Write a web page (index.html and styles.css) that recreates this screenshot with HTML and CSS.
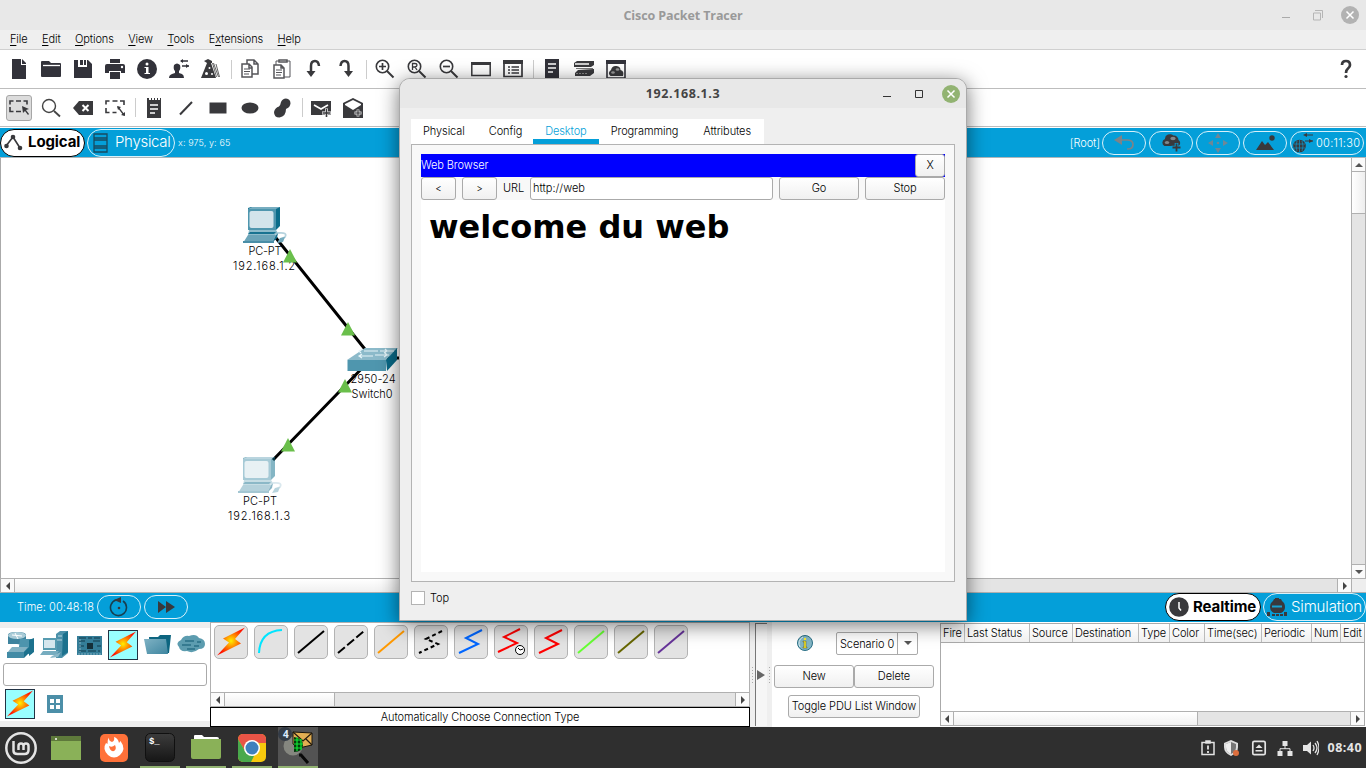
FILE: index.html
```html
<!DOCTYPE html>
<html lang="en">
<head>
<meta charset="utf-8">
<title>Cisco Packet Tracer</title>
<link rel="stylesheet" href="styles.css">
</head>
<body>
<svg class="defs" width="0" height="0" aria-hidden="true">
  <defs>
    <radialGradient id="hot" cx=".5" cy=".48" r=".5"><stop offset="0" stop-color="#fff000"/><stop offset=".45" stop-color="#ff8a00"/><stop offset="1" stop-color="#ff1400"/></radialGradient>
    <linearGradient id="steel" x1="0" y1="0" x2="1" y2="1"><stop offset="0" stop-color="#7fb2c4"/><stop offset="1" stop-color="#3f86a0"/></linearGradient>
    <linearGradient id="term" x1="0" y1="0" x2="0" y2="1"><stop offset="0" stop-color="#3c3c3c"/><stop offset="1" stop-color="#161616"/></linearGradient>
    <symbol id="bolt" viewBox="0 0 30 30"><path d="M29 .500 7 11.500l6 4L1 28.500l24-12-6-4.500Z" fill="url(#hot)"/></symbol>
    <symbol id="zoomglass" viewBox="0 0 20 20"><circle cx="7.500" cy="7.500" r="6.200" fill="none" stroke="#39393c" stroke-width="1.600"/><path d="m12 12 6.500 6.500" stroke="#39393c" stroke-width="2"/></symbol>
    <symbol id="pc" viewBox="0 0 46 38">
      <path d="m7 2 3-1h29v19l-4 4H7Z" fill="#0b6d8a"/><path d="M7 3h28v21H7Z" fill="#4f96ae"/><path d="m7 3 4-2h28l-4 2Z" fill="#77adc0"/>
      <rect x="8.500" y="5" width="24" height="17" rx="2" fill="#d3e4eb"/>
      <path d="M8 24h27l2 3-3 2H7Z" fill="#8ebccb"/><path d="M9 26h26l-2 2H7Z" fill="#197391"/>
      <path d="M7 29h28l-4 8H2Z" fill="#6ba4b8"/><path d="m35 29 2-2-1 5-5 5Z" fill="#176f8d"/><path d="M2 35h31v2H2Z" fill="#4a8ea7"/>
      <path d="M37 27q10-1 7 4l-4 2" fill="none" stroke="#b6d3de" stroke-width="1.800"/><path d="m39 32 5-1-2 5-6 1Z" fill="#73aabd"/>
    </symbol>
    <symbol id="tri" viewBox="0 0 14 14"><path d="M7 0 14 13.500H0Z" fill="#6abf4b"/></symbol>
    <symbol id="cloudadd" viewBox="0 0 20 20"><path d="M3.500 13a3.800 3.800 0 0 1 .5-7 5 4.500 0 0 1 8.500-3.500 4.500 4.500 0 0 1 5 4.500 3.500 3.500 0 0 1 0 6Z" fill="#39393c"/><ellipse cx="6" cy="9.500" rx="2.200" ry="1.500" fill="#7f878b"/><ellipse cx="12" cy="5.500" rx="2.700" ry="1.700" fill="#7f878b"/><path d="M15.500 10v9.500M10.500 14.500h9.500" stroke="#049fd9" stroke-width="3.600"/><path d="M15.500 10.500v8M11.500 14.500h8" stroke="#39393c" stroke-width="1.800"/></symbol>
  </defs>
</svg>

<div class="desktop">
  <header class="titlebar"><span class="caption">Cisco Packet Tracer</span>
    <div class="winctl">
      <svg width="80" height="20"><path d="M2 12.500h8" stroke="#aaa"/><path d="M35 5.500h7.500V13M33.500 8h7v7h-7Z" fill="none" stroke="#b5b5b5"/><circle cx="70" cy="10" r="9" fill="#b2b2b2"/><path d="m66.500 6.500 7 7m0-7-7 7" stroke="#fff" stroke-width="1.500"/></svg>
    </div>
  </header>
  <nav class="menubar"><span><u>F</u>ile</span><span><u>E</u>dit</span><span><u>O</u>ptions</span><span><u>V</u>iew</span><span><u>T</u>ools</span><span>E<u>x</u>tensions</span><span><u>H</u>elp</span></nav>

  <div class="toolbar main">
    <i class="tool"><svg width="20" height="20"><path d="M3 0h9v6h5v14H3Z" fill="#32323a"/><path d="m13 0 4 4v1h-4Z" fill="#32323a"/></svg></i>
    <i class="tool"><svg width="20" height="20"><path d="M0 3q0-1 1-1h7l2 2h9q1 0 1 1v12q0 1-1 1H1q-1 0-1-1Z" fill="#32323a"/><path d="M2 6.500h17" stroke="#fff" stroke-width="1.300"/></svg></i>
    <i class="tool"><svg width="20" height="20"><path d="M1 1h14l4 4v14H1Z" fill="#32323a"/><path d="M5 0h9v8H5Z" fill="#fff"/><path d="M5 1h5v5H5ZM11 1h2v5h-2Z" fill="#32323a"/><path d="M5 1h2v6h6V1h1v7H5Z" fill="#fff"/></svg></i>
    <i class="tool"><svg width="20" height="20"><path d="M5 0h10v4H5ZM2 5h16q2 0 2 2v7h-4v-2H4v2H0V7q0-2 2-2ZM5 13h10v7H5Z" fill="#32323a"/><circle cx="17" cy="8" r="1.200" fill="#fff"/></svg></i>
    <i class="tool"><svg width="20" height="20"><circle cx="10" cy="10" r="10" fill="#32323a"/><circle cx="10" cy="5" r="1.500" fill="#fff"/><path d="M7.500 8h4v6h1.500v1H7.500v-1H9V9H7.500Z" fill="#fff"/></svg></i>
    <i class="tool"><svg width="20" height="20"><path d="M0 19q0-3 3-4l3-1v-2q-2-2-1-6 3-3 6 0 1 4-1 6v2l3 1q2 1 2 4Z" fill="#32323a"/><path d="M12 2h7M13 7h7" stroke="#32323a" stroke-width="1.500"/><path d="M14 0v4l-3-2ZM17 5v4l3-2Z" fill="#32323a"/></svg></i>
    <i class="tool"><svg width="20" height="20"><path d="M6 4h4l5 15H0Z" fill="#39393c"/><path d="m3 2 4-2 4 2v2H6Z" fill="#39393c"/><path d="m11.500 4 4 14m-3-14 5 14m1 0L15 5" stroke="#666" fill="none"/><circle cx="5.500" cy="14.500" r="1.500" fill="#fff"/><circle cx="8.500" cy="9" r="1" fill="#fff"/><circle cx="11" cy="15" r="1" fill="#fff"/></svg></i>
    <b class="sep"></b>
    <i class="tool"><svg width="20" height="20" fill="#fff" stroke="#55555a" stroke-width="1.500"><path d="M7 1h7l4 4v10H7ZM14 1v4h4"/><path d="M2 5h7l3 3v10H2ZM9 5v4h3"/><path d="M4 10h6M4 12.500h6M4 15h5" stroke-width="1.200"/></svg></i>
    <i class="tool"><svg width="20" height="20" fill="#fff" stroke="#55555a" stroke-width="1.500"><path d="M4 2h14v16H4Z" stroke-width="1"/><path d="M7 1h8v2H7Z"/><path d="M2 6h7l3 3v10H2ZM9 6v3h3"/><path d="M4 11h6M4 13.500h6M4 16h5" stroke-width="1.200"/></svg></i>
    <i class="tool"><svg width="20" height="20"><path d="M7 13V7q0-5 4-5 3.500 0 4 5" fill="none" stroke="#39393c" stroke-width="2.500"/><path d="M2.500 12h9L7 18Z" fill="#39393c"/></svg></i>
    <i class="tool"><svg width="20" height="20"><path d="M12.500 13V7q0-5-4-5-3.500 0-4 5" fill="none" stroke="#39393c" stroke-width="2.500"/><path d="M8 12h9l-4.500 6Z" fill="#39393c"/></svg></i>
    <b class="sep"></b>
    <i class="tool"><svg width="20" height="20"><use href="#zoomglass"/><path d="M4 7.500h7M7.500 4v7" stroke="#39393c" stroke-width="1.700"/></svg></i>
    <i class="tool"><svg width="20" height="20"><use href="#zoomglass"/><path d="M5.500 11V4.500H8q2 0 2 1.500T8 8H6m2 0 2 3" fill="none" stroke="#39393c" stroke-width="1.300"/></svg></i>
    <i class="tool"><svg width="20" height="20"><use href="#zoomglass"/><path d="M4 7.500h7" stroke="#39393c" stroke-width="1.700"/></svg></i>
    <i class="tool"><svg width="20" height="20"><path d="M.800 4h18.400v12.500H.800Z" fill="#fff" stroke="#39393c" stroke-width="1.500"/><path d="M0 3h20v3H0Z" fill="#39393c"/></svg></i>
    <i class="tool"><svg width="20" height="20"><path d="M1 2h18v15.500H1Z" fill="#fff" stroke="#39393c" stroke-width="1.700"/><path d="M0 1h20v4H0Z" fill="#39393c"/><path d="M5 8h2m1.500 0H16M5 11h2m1.500 0H16M5 14h2m1.500 0H16" stroke="#39393c" stroke-width="1.500"/></svg></i>
    <b class="sep"></b>
    <i class="tool"><svg width="20" height="20"><path d="M3 0h14v20H3Z" fill="#32323a"/><path d="M6 5h8M6 9h8M6 13h5" stroke="#fff" stroke-width="1.500"/></svg></i>
    <i class="tool"><svg width="20" height="20"><path d="M3 2h17v4l-3 2H0V4Z" fill="#39393c"/><path d="M1 5h14" stroke="#ccc" stroke-width="2"/><path d="M2 9h17v1H2Z" fill="#777"/><path d="m4 11 16-1v4l-4 3H1v-3Z" fill="#39393c"/><path d="M2 14.500h12" stroke="#888" stroke-dasharray="2 1"/></svg></i>
    <i class="tool"><svg width="20" height="20"><path d="M1 2h18v17H1Z" fill="#fff" stroke="#32323a" stroke-width="1.600"/><path d="M0 1h20v4H0Z" fill="#32323a"/><path d="M4.500 17q-3.500-3 .5-6 1-4.500 5.500-4 4 .500 4 4 4 1 2.500 6Z" fill="#39393c"/><ellipse cx="7" cy="13.500" rx="1.800" ry="1.200" fill="#999"/><ellipse cx="11.500" cy="10.500" rx="1.800" ry="1.200" fill="#999"/></svg></i>
    <i class="tool helpmark"><svg width="20" height="20"><path d="M6 6q0-4 4-4t4 4q0 2-2 3.500T10 14" stroke="#39393c" stroke-width="2.700" fill="none"/><circle cx="10" cy="17.500" r="1.600" fill="#39393c"/></svg></i>
  </div>

  <div class="toolbar draw">
    <i class="tool picked"><svg width="20" height="20"><path d="M1 6.500V3h3.500M7 3h5m2.500 0H18v3.500M1 9v4.500h3.500M7 13.500h5" stroke="#39393c" stroke-width="1.600" fill="none"/><path d="m13 8 7 3-3 1 3 4-1 1-3-4-2 2Z" fill="#39393c"/></svg></i>
    <i class="tool"><svg width="20" height="20"><circle cx="8" cy="8" r="6.500" fill="none" stroke="#444" stroke-width="1.400"/><path d="m13 13 6 5.500" stroke="#444" stroke-width="1.800"/></svg></i>
    <i class="tool"><svg width="20" height="20"><path d="m0 10 6-7h14v14H6Z" fill="#39393c"/><path d="m9.500 7 6 6m0-6-6 6" stroke="#fff" stroke-width="2"/></svg></i>
    <i class="tool"><svg width="20" height="20"><path d="M1 6.500V3h3.500M7.500 3h5M15 3h4v4M1 10v4.500h3.500m3 0h4" stroke="#39393c" stroke-width="1.600" fill="none"/><path d="m13 9 6 8" stroke="#39393c" stroke-width="1.300"/><path d="m12 8 4 1-3 3ZM20 18l-4-1 4-3Z" fill="#39393c"/></svg></i>
    <b class="sep"></b>
    <i class="tool"><svg width="20" height="20"><path d="M3 0h2v2h2V0h1v2h2V0h1v2h2V0h1v2h2V0h1v20H3Z" fill="#39393c"/><path d="M6 7h8M6 11h8M6 15h5" stroke="#fff" stroke-width="1.300"/></svg></i>
    <i class="tool"><svg width="20" height="20"><path d="M4 16.500 16 4" stroke="#39393c" stroke-width="2"/></svg></i>
    <i class="tool"><svg width="20" height="20"><path d="M1.500 4.500h17v11h-17Z" fill="#39393c"/></svg></i>
    <i class="tool"><svg width="20" height="20"><ellipse cx="10" cy="10" rx="8.500" ry="5.500" fill="#39393c"/></svg></i>
    <i class="tool"><svg width="20" height="20"><path d="M9 4q1.500-3.500 5-3.500 4.500.5 4.500 5-.5 4-4.500 5.500 0 7.500-6.500 8.500-5.500 0-5.500-5.500 1-4.500 5-5.500 1.500-1.500 2-4.500Z" fill="#39393c"/></svg></i>
    <b class="sep"></b>
    <i class="tool"><svg width="20" height="20"><path d="M0 3h20v14H0Z" fill="#39393c"/><path d="m3 7 7 4 7-4" fill="none" stroke="#fff" stroke-width="1.700"/><path d="M15.500 10.500v9M11 15h9" stroke="#fff" stroke-width="3"/><path d="M15.500 11v8m-4-4h8" stroke="#39393c" stroke-width="1.600"/></svg></i>
    <i class="tool"><svg width="20" height="20"><path d="m0 5 10-5 10 5v15H0Z" fill="#39393c"/><path d="m2 6 8-4 8 4v1l-8 5-8-5Z" fill="#fff"/><path d="M15 11.500v7m-3.500-3.500h7" stroke="#ddd" stroke-width="2.800"/><path d="M15 12v6m-3-3h6" stroke="#39393c" stroke-width="1.200"/></svg></i>
  </div>

  <div class="bluebar nav">
    <div class="pill solid"><svg width="20" height="18"><path d="M2 12 9 3l7 11" fill="none" stroke="#39393c" stroke-width="1.600"/><circle cx="2.500" cy="12" r="2.300" fill="#39393c"/><circle cx="9" cy="3" r="2.300" fill="#39393c"/><circle cx="16" cy="14" r="2.300" fill="#39393c"/></svg><span class="lg">Logical</span></div>
    <div class="pill outline"><svg width="17" height="20"><path d="M2 1h13v18H2ZM2 5h13M2 7h13M2 13h13M2 15h13" fill="none" stroke="#174b60" stroke-width="1.300"/></svg><span class="ph">Physical</span></div>
    <span class="coords">x: 975, y: 65</span>
    <span class="root">[Root]</span>
    <div class="chip"><svg width="22" height="20"><path d="M5 7h9q6 0 6 4.500T15 16h-1" fill="none" stroke="#7d8388" stroke-width="1.700"/><path d="M1 7 9 2v10Z" fill="#7d8388"/></svg></div>
    <div class="chip"><svg width="20" height="20"><use href="#cloudadd"/></svg></div>
    <div class="chip"><svg width="20" height="20" fill="#6f8796"><path d="m10 0 3 5H7ZM10 20l3-5H7ZM0 10l5-3v6ZM20 10l-5-3v6Z"/><circle cx="10" cy="10" r="1.300"/></svg></div>
    <div class="chip"><svg width="20" height="20" fill="#39393c"><path d="M1 17 7 8l3 4 3-3 6 8Z"/><circle cx="17" cy="5" r="2.700"/></svg></div>
    <div class="chip clock"><svg width="20" height="20"><circle cx="6.500" cy="13" r="6.300" fill="#39393c"/><path d="M1 11h11M1 15h11M6.500 7v12M4 8q-2 5 0 10M9 8q2 5 0 10" stroke="#118dbb" stroke-width=".8" fill="none"/><path d="M12 2h8m-8 6h8" stroke="#39393c" stroke-width="1.200"/><path d="m10 2 4-2v4ZM20 8l-4-2v4Z" fill="#39393c"/></svg><span>00:11:30</span></div>
  </div>

  <div class="workspace">
    <svg class="topology" width="1350" height="420" viewBox="1 158 1350 420">
      <path d="M276 238 372 358 273 460" fill="none" stroke="#000" stroke-width="3"/><path d="M372 358h40" stroke="#000" stroke-width="3"/>
      <use href="#pc" x="241" y="206" width="46" height="38"/>
      <use href="#pc" x="236" y="456" width="46" height="38" opacity=".5"/>
      <path d="m365 348 33 0-12 12h-39Z" fill="#8cbaca"/><path d="M347.500 360H386v11h-38.500Z" fill="#4f96ae"/><path d="m386 360 11-12v12l-10 11Z" fill="#096a88"/>
      <path d="m364 351h14m-18 5h13m7-5h14m-19 4h14m-27-6-3 2 2 2m24-4 2 2-3 2m-22 1-3 2 3 2m23-5 2 2-3 2" stroke="#e5f4f8" stroke-width="1.200" fill="none"/>
      <g class="devname"><text x="265" y="255" textLength="33">PC-PT</text><text x="264" y="270" textLength="62">192.168.1.2</text><text x="373" y="383" textLength="45">2950-24</text><text x="372" y="398" textLength="41">Switch0</text><text x="260" y="505" textLength="34">PC-PT</text><text x="259" y="520" textLength="62">192.168.1.3</text></g>
      <use href="#tri" x="283" y="249" width="14" height="14"/><use href="#tri" x="341" y="322" width="14" height="14"/><use href="#tri" x="338" y="379" width="14" height="14"/><use href="#tri" x="281" y="438" width="14" height="14"/>
    </svg>
    <div class="vscroll"><b class="arrow up"></b><b class="thumb"></b><b class="track"></b><b class="arrow down"></b></div>
  </div>
  <div class="hscroll wide"><b class="arrow left"></b><b class="thumb"></b><b class="track"></b><b class="arrow right"></b><b class="corner"></b></div>

  <div class="bluebar time">
    <span class="elapsed">Time: 00:48:18</span>
    <div class="chip"><svg width="20" height="20"><path d="M7 3a8 8 0 1 0 7 1" fill="none" stroke="#173f50" stroke-width="1.600"/><path d="m5 3 7-3v6Z" fill="#39393c"/><circle cx="10" cy="11" r="1.300" fill="#39393c"/></svg></div>
    <div class="chip"><svg width="20" height="20"><path d="m2 4 8 6-8 6Zm8 0 9 6-9 6Z" fill="#39393c"/></svg></div>
    <div class="pill solid real"><svg width="20" height="20"><circle cx="10" cy="10" r="9.800" fill="#39393c"/><path d="M10 5v6l2 2.500" fill="none" stroke="#fff" stroke-width="1.500"/></svg><span class="lg">Realtime</span></div>
    <div class="pill outline sim"><svg width="20" height="20"><path d="M7 2h1V1h4v1h2l1 2q3 2 3 6t-4 6H7q-4-2-4-6t3-6Z" fill="#39393c"/><path d="M5 9.500h10" stroke="#17a1d0" stroke-width="2"/><path d="M0 15h3v4H0Zm5 2h3v2H5Zm4 0h3v2H9Zm4 0h3v2h-3Zm4-2h3v4h-3Z" fill="#39393c"/></svg><span class="ph">Simulation</span></div>
  </div>

  <div class="bottom">
    <section class="devices">
      <div class="types">
        <svg width="34" height="32"><path d="M7 6q0-3 9-3t9 3v7q-3 3-9 2H7Z" fill="#3e839e"/><ellipse cx="16" cy="6.500" rx="9" ry="3.500" fill="#a9cbd7"/><path d="M19 10h12v15H17Z" fill="#4d94ad"/><path d="m28 11 5-2v14l-5 4Z" fill="#1c718d"/><path d="m11 18 16 0-5 6H6Z" fill="#83b2c3"/><path d="M6 23h17v6H6Z" fill="#428ba5"/><path d="m23 23 5-5v6l-5 5Z" fill="#1c718d"/><path d="m11 6 10 1m-7-3 3 6" stroke="#fff"/></svg>
        <svg class="hosts" width="34" height="32"><path d="m17 5 4-3h8v22l-6 5h-6Z" fill="#4c91aa"/><path d="m24 5 5-3v21l-6 4Z" fill="#1c718d"/><path d="M4 9h14v12H4Z" fill="#579bb0"/><path d="M5 11h11v8H5Z" fill="#d5e6ed"/><path d="m4 22 16 0-3 4H1Z" fill="#76acbf"/><path d="m19 7 4 0M18 11h5" stroke="#b8d6df"/><path d="m13 27 9-4-3 5-8 1Z" fill="#8ab8c8"/></svg>
        <svg width="34" height="32"><path d="M4 7h25v19H4Z" fill="#347d98"/><path d="M6 9h7m2 0h4m2 0h6M6 12h6m8 0h7M6 22h7m2 0h8m2 0h2M6 17h5m13 0h4" stroke="#1c5064" stroke-width="1.500"/><path d="M14 14h6v6h-6Z" fill="#142f39"/><path d="M5 25h23M7 10v13" stroke="#83b2c3" stroke-dasharray="2 1"/></svg>
        <div class="boltbox"><svg width="28" height="28"><use href="#bolt"/></svg></div>
        <svg width="34" height="32"><path d="M8 8h9l2-2h11l-2 18H9Z" fill="#0d6580"/><path d="M3 10h22l2 15H6Z" fill="url(#steel)"/></svg>
        <svg class="cloud" width="34" height="32"><path d="M7 12q3-5 8-4 7-3 10 2 6 1 6 6t-6 5q-6 5-12 2-7 1-8-4-4-4 2-7Z" fill="#5c9caf"/><path d="M11 13h9m3 1h4M8 17h9m3 1h5m-12 3h8" stroke="#286f86" stroke-width="1.500"/></svg>
      </div>
      <div class="search"></div>
      <div class="subtypes"><div class="boltbox"><svg width="28" height="28"><use href="#bolt"/></svg></div><svg width="16" height="20"><path d="M0 1h16v18H0Z" fill="#4c8fa8"/><path d="M3 5h4v4H3Zm6 0h4v4H9ZM3 11h4v4H3Zm6 0h4v4H9Z" fill="#fff"/></svg></div>
    </section>
    <section class="connections">
      <div class="links">
        <i><svg width="34" height="34"><use href="#bolt" x="2" y="2" width="30" height="30"/></svg></i>
        <i><svg width="34" height="34"><path d="M5 28Q6 6 28 5" fill="none" stroke="#00e5ff" stroke-width="2"/></svg></i>
        <i><svg width="34" height="34"><path d="M4 28 30 6" stroke="#000" stroke-width="2"/></svg></i>
        <i><svg width="34" height="34"><path d="M4 28 30 6" stroke="#000" stroke-width="2" stroke-dasharray="9 3"/></svg></i>
        <i><svg width="34" height="34"><path d="M4 28 30 6" stroke="#ff9900" stroke-width="2"/></svg></i>
        <i><svg width="34" height="34"><path d="m28 6-16 8 12 5-19 9" fill="none" stroke="#000" stroke-width="2" stroke-dasharray="4 3"/></svg></i>
        <i><svg width="34" height="34"><path d="M28 5 12 13l12 6-19 9" fill="none" stroke="#0066ff" stroke-width="2"/></svg></i>
        <i><svg width="34" height="34"><path d="m26 4-16 8 13 6-19 9" fill="none" stroke="#f00" stroke-width="2"/><circle cx="26" cy="25" r="4.500" fill="#fff" stroke="#000"/><path d="m24 23 2 2 3-1" fill="none" stroke="#000"/></svg></i>
        <i><svg width="34" height="34"><path d="M28 5 12 13l12 6-19 9" fill="none" stroke="#f00" stroke-width="2"/></svg></i>
        <i><svg width="34" height="34"><path d="M4 28 30 6" stroke="#66ff33" stroke-width="2"/></svg></i>
        <i><svg width="34" height="34"><path d="M4 28 30 6" stroke="#666600" stroke-width="2"/></svg></i>
        <i><svg width="34" height="34"><path d="M4 28 30 6" stroke="#663399" stroke-width="2"/></svg></i>
      </div>
      <div class="hscroll conn"><b class="arrow left"></b><b class="thumb"></b><b class="track"></b><b class="arrow right"></b></div>
      <div class="status">Automatically Choose Connection Type</div>
    </section>
    <div class="splitter"><b class="grip"></b><b class="rail"></b><b class="grip"></b></div>
    <section class="scenario">
      <div class="pick"><svg width="16" height="16"><circle cx="8" cy="8" r="7.500" fill="#83b5c5" stroke="#296f85"/><path d="M3 12A7 7 0 0 1 6 2" stroke="#d7edf3" fill="none"/><path d="M6 6h3v6h1v1H6v-1h1V7H6Z" fill="#ffef2b" stroke="#585826" stroke-width=".5"/><circle cx="8" cy="4" r="1.200" fill="#ffef2b"/></svg><div class="combo"><span>Scenario 0</span><b></b></div></div>
      <div class="pair"><span class="btn">New</span><span class="btn">Delete</span></div>
      <span class="btn toggle">Toggle PDU List Window</span>
    </section>
    <section class="pdu">
      <div class="cols"><span>Fire</span><span>Last Status</span><span>Source</span><span>Destination</span><span>Type</span><span>Color</span><span>Time(sec)</span><span>Periodic</span><span>Num</span><span>Edit</span></div>
      <div class="rows"></div>
      <div class="hscroll pduscroll"><b class="arrow left"></b><b class="thumb"></b><b class="track"></b><b class="arrow right"></b></div>
    </section>
  </div>

  <footer class="taskbar">
    <i class="app first"><svg width="34" height="34"><circle cx="17" cy="17" r="14.700" fill="none" stroke="#e4e4e4" stroke-width="2.500"/><path d="M9.500 10v10q0 3 4 3h7q4 0 4-4v-4q0-2.500-2.500-2.500T19.500 15v4m0-4q0-2.500-2.500-2.500T14.500 15v4" fill="none" stroke="#e4e4e4" stroke-width="2.500"/></svg></i>
    <i class="app show"><svg width="34" height="34"><path d="M2 5h30v24H2Z" fill="#8ab158"/><path d="M2 5h30v5H2Z" fill="#5e793b"/><circle cx="7" cy="8" r="1" fill="#fff"/></svg></i>
    <i class="app ff"><svg width="34" height="34"><rect x="3" y="3" width="28" height="28" rx="5" fill="#ff7139"/><path d="M12 6.500q-.5 3.500 3 4.500 3-1 2-5 4 1 5 6l1.500-2q6 8-.5 14-6 5-12 0-6-6-2-12l1.500 1q-.5-4 1.500-6.500Z" fill="#fff"/><path d="M12 15q3 2 6-1 2 4-1 6-4 1-5-5Z" fill="#ff7139"/></svg></i>
    <i class="app open"><svg width="34" height="34"><rect x="2.500" y="2.500" width="29" height="28" rx="5" fill="url(#term)" stroke="#101010"/><text class="prompt" x="6" y="13">$_</text></svg></i>
    <i class="app open"><svg width="34" height="34"><path d="M5 5q0-1 1-1h7l2 2h13q2 0 2 2v3H5Z" fill="#fff"/><path d="M2 8h30v18q0 2-2 2H4q-2 0-2-2Z" fill="#8ab158"/></svg></i>
    <i class="app open"><svg width="34" height="34"><clipPath id="ccr"><rect x="3" y="3" width="28" height="28" rx="5"/></clipPath><g clip-path="url(#ccr)"><path d="M3 3h28v28H3Z" fill="#f7c90d"/><path d="M3 3h28v9H17l-7 8-7-12Z" fill="#e95446"/><path d="m3 8 7 12 4 4 5 1-3 6H3Z" fill="#49a94c"/></g><circle cx="17" cy="17" r="8" fill="#fff"/><circle cx="17" cy="17" r="6.500" fill="#3f80bd"/></svg></i>
    <i class="app open active"><svg width="40" height="37"><circle cx="15" cy="18" r="9.500" fill="#85867f"/><path d="m15 4 19 1v12l-13 3-6-4Z" fill="#e2ae52" stroke="#19150e"/><path d="m15 4 10 9 9-8M21 20l2-8m5-1 6 6" fill="none" stroke="#241b0e" stroke-width="1.200"/><path d="M16 9q9 1 9 8t-9 7Z" fill="#03390b"/><path d="M16 12h7m-7 4h9m-9 4h8m-5-11v14m4-12v11" stroke="#10e936" stroke-width="1.200"/><path d="m21 27 2 0 7 8" stroke="#090909" stroke-width="3" fill="none"/><circle cx="7" cy="6" r="7" fill="#333b46"/><text class="badge" x="5" y="10">4</text></svg></i>
    <div class="tray">
      <svg width="16" height="16" stroke="#e4e4e4" fill="none" stroke-width="1.500"><path d="M2 2.500h12v12H2ZM6 1h4v2H6Z"/><path d="M8 5.500v4M8 11v2" stroke-width="1.800"/></svg>
      <svg class="shield" width="18" height="16"><path d="m8 0 7 3v4q0 6-7 9-7-3-7-9V3Z" fill="#ddd"/><path d="m8 2 5 2v3q0 5-5 7-5-2-5-7V4Z" fill="#777"/><path d="M8 2v12Q3 12 3 7V4Z" fill="#eee"/><circle cx="13" cy="13" r="3" fill="#dc6e3d"/></svg>
      <svg width="16" height="16"><rect x="1.800" y="1.300" width="12.400" height="13.400" rx="1.500" fill="none" stroke="#e4e4e4" stroke-width="1.700"/><path d="M4.500 8 8 4.500 11.500 8Zm0 2h7v1.500h-7Z" fill="#e4e4e4"/></svg>
      <svg width="16" height="16"><path d="M5.500 1h5v5h-5ZM.500 11h5v5h-5Zm10 0h5v5h-5Z" fill="#e4e4e4"/><path d="M8 5v4M3 12V8.700h10V12" fill="none" stroke="#e4e4e4"/></svg>
      <svg width="16" height="16"><path d="M0 5h4l4-3.500v13L4 11H0Z" fill="#e4e4e4"/><path d="M10 5q2 3 0 6m2-8q4 5 0 10m2-12q4 7 0 14" fill="none" stroke="#e4e4e4" stroke-width="1.300"/></svg>
      <span>08:40</span>
    </div>
  </footer>

  <div class="dialog">
    <div class="dtitle"><span class="caption">192.168.1.3</span><div class="winctl"><svg width="80" height="20"><path d="M3 12.500h8" stroke="#333"/><path d="M35.500 6.500h7v7h-7Z" fill="none" stroke="#333"/><circle cx="71" cy="10" r="9" fill="#92b372"/><path d="m67.500 6.500 7 7m0-7-7 7" stroke="#fff" stroke-width="1.500"/></svg></div></div>
    <div class="tabs"><span>Physical</span><span>Config</span><span class="on">Desktop</span><span>Programming</span><span>Attributes</span></div>
    <div class="pane">
      <div class="bhead"><span>Web Browser</span><span class="btn close">X</span></div>
      <div class="brow"><span class="btn small">&lt;</span><span class="btn small">&gt;</span><span class="urllabel">URL</span><span class="url">http://web</span><span class="btn">Go</span><span class="btn">Stop</span></div>
      <div class="page"><h1>welcome du web</h1></div>
    </div>
    <div class="top"><b></b><span>Top</span></div>
  </div>
</div>
</body>
</html>
```
FILE: styles.css
```css
* { box-sizing: border-box; }
body { margin: 0; overflow: hidden; }
svg { display: block; flex: none; }
.defs { position: absolute; }
i { font-style: normal; }
.desktop { position: relative; width: 1366px; height: 768px; display: flex; flex-direction: column; background: #fff; font: 300 11px/14px Inter, "Liberation Sans", sans-serif; letter-spacing: -.09px; color: #000; overflow: hidden; white-space: nowrap; }
.desktop > * { flex: none; }

.titlebar, .dtitle { display: grid; grid-template-columns: 1fr auto 1fr; align-items: center; height: 30px; background: #e8e8e8; }
.caption { grid-column: 2; font: 700 12.500px/18px "Open Sans", "Noto Sans", sans-serif; letter-spacing: -.1px; color: #999; padding-top: 2px; }
.winctl { justify-self: end; padding-right: 6px; }
.menubar { height: 20px; display: flex; gap: 14.500px; padding: 2px 0 0 10px; line-height: 15px; letter-spacing: -.12px; background: #efefef; border-bottom: 1px solid #d0d0d0; }
.menubar u { text-underline-offset: 2px; }

.toolbar { display: flex; align-items: center; padding-left: 3px; border-bottom: 1px solid #bdbdbd; }
.toolbar.main { height: 39px; }
.toolbar.draw { height: 38px; }
.tool { width: 32px; height: 26px; display: grid; place-items: center; }
.picked svg { width: 26px; height: 26px; padding: 2px; border: 1px solid #a7a7a7; border-radius: 3px; background: #dcdcdc; }
.sep { width: 7px; height: 19px; background: linear-gradient(#ccc, #ccc) 4px 0 / 1px 19px no-repeat; }
.helpmark { margin-left: auto; margin-right: 4px; }

.bluebar { display: flex; align-items: center; background: #049fd9; color: #fff; }
.bluebar.nav { height: 31px; border-top: 1px solid #fff; border-bottom: 1px solid #aeb6ba; }
.pill { height: 28px; display: flex; align-items: center; border-radius: 14px; }
.pill.solid { background: #fff; border: 1px solid #000; color: #000; }
.pill.outline { border: 1px solid #d8f1fa; }
.nav .solid { width: 85px; padding-left: 3px; margin-right: 2px; }
.nav .outline { width: 88px; padding-left: 4px; }
.lg { font: 700 15px/20px Inter, sans-serif; letter-spacing: -.1px; margin-left: 4px; }
.ph { font: 300 15px/20px Inter, sans-serif; letter-spacing: -.3px; margin-left: 6px; }
.nav .pill span { margin-top: -2px; }
.coords { font-size: 9px; margin-left: 3px; letter-spacing: .1px; }
.root { margin-left: auto; }
.chip { width: 44px; height: 24px; margin-left: 3px; display: grid; place-items: center; border: 1px solid #d8f1fa; border-radius: 12px; }
.root + .chip { margin-left: 2px; }
.chip.clock { width: 74px; margin-right: 2px; display: flex; align-items: center; gap: 4px; padding-left: 2px; letter-spacing: .3px; }
.chip.clock span { margin-left: -1px; }

.workspace { height: 420px; display: flex; border-left: 1px solid #aaa; }
.devname text { font: 300 11px Inter, sans-serif; text-anchor: middle; fill: #000; }
.vscroll { width: 15px; display: flex; flex-direction: column; border: solid #b0b0b0; border-width: 0 1px; }
.arrow { display: grid; place-items: center; flex: none; background: #fafafa; }
.arrow::before { content: ""; border: 4px solid transparent; }
.up { height: 13px; }
.down { height: 14px; }
.up::before { border-top: 0; border-bottom-color: #555; }
.down::before { border-bottom: 0; border-top-color: #555; }
.left { width: 13px; }
.right { width: 14px; }
.left::before { border-left: 0; border-right-color: #444; }
.right::before { border-right: 0; border-left-color: #444; }
.vscroll .thumb { height: 43px; background: linear-gradient(90deg, #fff, #eee); border: solid #b0b0b0; border-width: 1px 0; }
.track { flex: 1; background: #e4e4e4; }
.vscroll .down { border-top: 1px solid #b0b0b0; }
.hscroll { display: flex; border: 1px solid #b0b0b0; }
.hscroll .thumb { background: linear-gradient(#fff, #f0f0f0); border: solid #b0b0b0; border-width: 0 1px; }
.hscroll .right { border-left: 1px solid #b0b0b0; }
.wide { height: 15px; border-right: 0; }
.wide .thumb { width: 800px; }
.corner { width: 15px; border-left: 1px solid #b0b0b0; background: #eee; }

.bluebar.time { height: 29px; padding-bottom: 1px; }
.elapsed { width: 94px; margin: 0 0 0 17px; letter-spacing: .05px; }
.elapsed + .chip { margin-left: -14px; }
.time .chip { height: 24px; }
.real { margin-left: auto; width: 96px; padding-left: 3px; }
.sim { margin-left: 2px; width: 103px; padding-left: 3px; }
.time .ph { margin-left: 4px; letter-spacing: -.15px; }

.bottom { height: 105px; display: flex; background: #fff; }
.devices { width: 210px; border: solid #eee; border-width: 6px 0; }
.types { display: flex; padding-left: 1px; height: 34px; align-items: center; }
.hosts { margin-left: 4px; }
.cloud { margin: -3px 0 0 -1px; }
.boltbox { width: 30px; height: 30px; border: 1px solid #234; background: #9ff; flex: none; }
.types .boltbox { margin: 0 3px 0 1px; }
.search { width: 204px; height: 23px; margin: 1px 0 3px 3px; border: 1px solid #aaa; border-radius: 3px; }
.subtypes { display: flex; align-items: center; gap: 12px; padding-left: 5px; }
.connections { width: 540px; display: flex; flex-direction: column; border-left: 1px solid #b0b0b0; border-right: 1px solid #b0b0b0; border-top: 1px solid #b0b0b0; }
.links { height: 69px; display: flex; gap: 6px; padding: 2px 0 0 3px; }
.links i { width: 34px; height: 34px; border: 1px solid #b3b3b3; border-radius: 5px; background: #e3e3e3; }
.links svg { margin: -1px; }
.conn { height: 15px; border-width: 1px 0; }
.conn .thumb { width: 111px; }
.status { height: 20px; margin: 0 -1px; border: 1px solid #000; text-align: center; line-height: 19px; }
.splitter { width: 22px; display: flex; justify-content: space-between; align-items: center; background: #efefef; }
.grip { width: 4px; height: 17px; margin-left: 1px; background: radial-gradient(circle, #aaa 40%, transparent 45%) 0 0 / 3px 3px; }
.rail { flex: 1; height: 103px; background: #f6f6f6; border-left: 1px solid #777; border-top: 1px solid #777; display: grid; align-items: center; }
.rail::before { content: ""; border: 5px solid transparent; border-left: 8px solid #666; border-right: 0; margin-left: 1px; }
.scenario { width: 168px; padding: 9px 0 0 2px; }
.pick { display: flex; align-items: center; padding-left: 23px; gap: 23px; height: 24px; }
.combo { width: 82px; height: 23px; border: 1px solid #aaa; border-radius: 2px; display: flex; line-height: 22px; padding-left: 3px; }
.combo b { width: 20px; margin-left: auto; border-left: 1px solid #aaa; display: grid; place-items: center; }
.combo b::before { content: ""; border: 4px solid transparent; border-top-color: #555; border-bottom: 0; }
.btn { height: 23px; width: 80px; display: block; text-align: center; line-height: 21px; border: 1px solid #aaa; border-radius: 3px; background: linear-gradient(#fff, #f0f0f0); color: #000; flex: none; }
.pair { display: flex; margin: 10px 0 7px; }
.toggle { width: 132px; margin-left: 14px; }
.pdu { flex: 1; margin: 1px 1px 1px 0; border: 1px solid #aaa; border-bottom: 0; display: flex; flex-direction: column; }
.cols { height: 19px; display: grid; grid-template-columns: 24px 65px 43px 66px 31px 35px 57px 50px 29px 23px; background: linear-gradient(#fff, #f0f0f0); border-bottom: 1px solid #aaa; line-height: 18px; }
.cols span { padding-left: 2px; border-right: 1px solid #bbb; overflow: hidden; }
.cols span:last-child { border: 0; }
.rows { flex: 1; }
.pduscroll { height: 15px; border-width: 1px 0; }
.pduscroll .left { width: 12px; }
.pduscroll .thumb { width: 245px; }

.taskbar { height: 41px; display: flex; background: #2f2f2f; color: #e4e4e4; }
.app { width: 40px; margin-right: 6px; display: flex; flex-direction: column; align-items: center; padding-top: 4px; }
.app.first { width: 42px; margin-right: 4px; }
.app.show { margin-right: 8px; }
.open { box-shadow: inset 0 -2px #92b372; }
.active { background: #535353; padding-top: 1px; }
.active svg { overflow: visible; }
.prompt { font: bold 9px "Liberation Mono", monospace; fill: #fff; }
.badge { font: bold 10px "Open Sans", sans-serif; fill: #ddecff; }
.tray { margin-left: auto; display: flex; align-items: center; gap: 10px; padding-right: 4px; font: 700 12.500px "Open Sans", sans-serif; letter-spacing: .45px; }
.shield { margin-left: -3px; }
.tray span { margin-left: -1px; }

.dialog { position: absolute; left: 399px; top: 78px; width: 568px; height: 543px; border: 1px solid #aaa; border-radius: 11px 11px 0 0; background: #efefef; box-shadow: 0 4px 20px rgba(0, 0, 0, .55); overflow: visible; display: flex; flex-direction: column; }
.dtitle { height: 29px; border-radius: 10px 10px 0 0; margin-bottom: 11px; }
.dtitle .caption { color: #444; letter-spacing: .6px; padding-top: 0; }
.tabs { align-self: flex-start; margin-left: 11px; height: 25px; display: flex; background: #fff; line-height: 25px; }
.tabs span { padding: 0 12px; }
.tabs span:nth-child(2) { padding-right: 11px; }
.tabs span:last-child { padding: 0 13px; }
.tabs .on { color: #049fd9; box-shadow: inset 0 -5px #049fd9; }
.pane { width: 544px; height: 438px; margin-left: 11px; padding: 9px; border: 1px solid #b3b3b3; background: #f8f8f8; }
.bhead { height: 23px; display: flex; justify-content: space-between; background: #00f; color: #fff; line-height: 23px; }
.btn.close { width: 30px; }
.brow { height: 23px; display: flex; gap: 6px; }
.btn.small { width: 35px; font-size: 10px; }
.urllabel { width: 21px; line-height: 22px; }
.url { flex: 1; border: 1px solid #aaa; border-radius: 3px; background: #fff; padding-left: 2px; line-height: 21px; letter-spacing: 0; }
.page { height: 372px; background: #fff; padding: 8px; }
.page h1 { margin: 0; font: bold 32px/38px "DejaVu Sans", sans-serif; letter-spacing: 0; color: #000; }
.top { display: flex; align-items: center; gap: 5px; margin: 9px 0 0 11px; }
.top b { width: 14px; height: 14px; background: #fff; border: 1px solid #b3b3b3; }
```
